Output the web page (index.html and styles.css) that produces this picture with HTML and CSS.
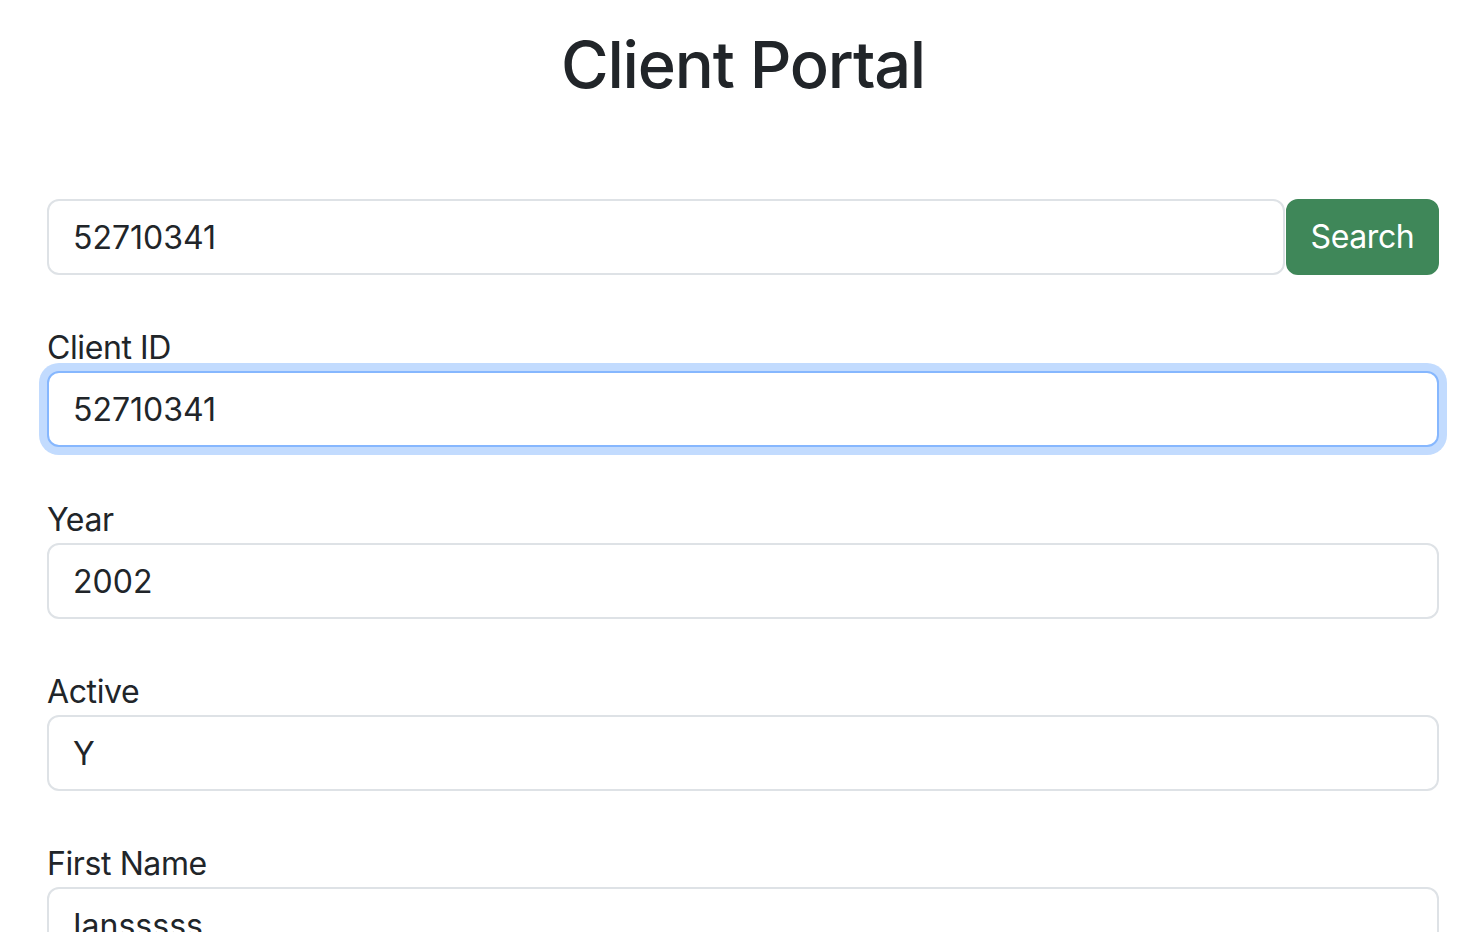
FILE: index.html
```html
<!DOCTYPE html>
<html lang="en">
<head>
<meta charset="utf-8">
<title>Client Portal</title>
<link rel="stylesheet" href="styles.css">
</head>
<body>
<main class="page">
  <h1 class="title">Client Portal</h1>
  <form class="search-row">
    <input class="field-input search-input" type="text" value="52710341">
    <button class="btn-search" type="button">Search</button>
  </form>
  <div class="field">
    <label class="field-label">Client ID</label>
    <input class="field-input is-focused" type="text" value="52710341">
  </div>
  <div class="field">
    <label class="field-label">Year</label>
    <input class="field-input" type="text" value="2002">
  </div>
  <div class="field">
    <label class="field-label">Active</label>
    <input class="field-input" type="text" value="Y">
  </div>
  <div class="field">
    <label class="field-label">First Name</label>
    <input class="field-input" type="text" value="Iansssss">
  </div>
</main>
</body>
</html>
```

FILE: styles.css
```css
* { box-sizing: border-box; }
html, body { margin: 0; padding: 0; background: #fff; }
body {
  font-family: Inter, "Liberation Sans", sans-serif;
  color: #212529;
  font-size: 32px;
  line-height: 1.5;
  overflow: hidden;
  height: 932px;
}
.page {
  padding: 26px 31px 0 47px;
  display: flex;
  flex-direction: column;
}
.title {
  margin: 0 0 95px 0;
  font-size: 65px;
  font-weight: 500;
  line-height: 1.2;
  text-align: center;
  letter-spacing: -1.2px;
}
.search-row {
  display: flex;
  gap: 1px;
  margin: 0 0 48px 0;
}
.field-input {
  display: block;
  width: 100%;
  height: 76px;
  padding: 12px 24px;
  font: inherit;
  color: #212529;
  background: #fff;
  border: 2px solid #dee2e6;
  border-radius: 12px;
  outline: none;
}
.search-input { flex: 1 1 auto; min-width: 0; }
.btn-search {
  flex: 0 0 auto;
  width: 153px;
  height: 76px;
  padding: 12px 0;
  font: inherit;
  letter-spacing: -0.4px;
  color: #fff;
  background: #3f8759;
  border: 2px solid #3f8759;
  border-radius: 12px;
}
.field {
  display: flex;
  flex-direction: column;
  margin-bottom: 48px;
}
.field-label {
  display: block;
  line-height: 46px;
  padding-top: 2px;
  letter-spacing: -0.4px;
}
.is-focused {
  border-color: #86b7fe;
  box-shadow: 0 0 0 8px rgba(13, 110, 253, 0.25);
}
```
